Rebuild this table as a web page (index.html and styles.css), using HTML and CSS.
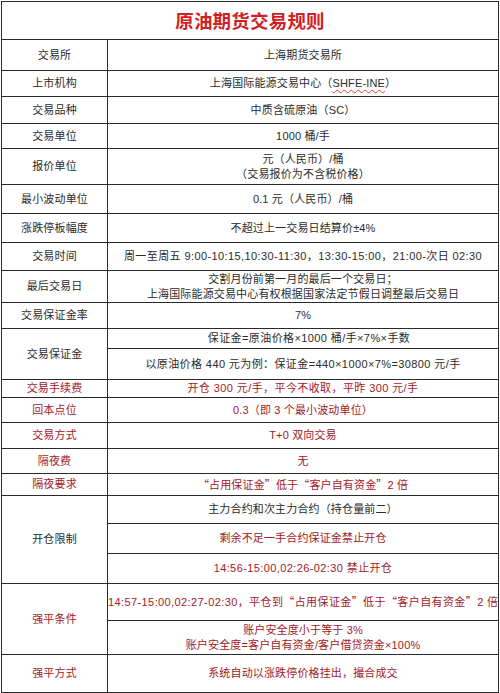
FILE: index.html
```html
<!DOCTYPE html>
<html lang="zh-CN">
<head>
<meta charset="utf-8">
<title>原油期货交易规则</title>
<link rel="stylesheet" href="styles.css">
</head>
<body>
<table class="rules">
  <colgroup><col class="c-label"><col class="c-value"></colgroup>
  <tr class="h38"><td colspan="2" class="title">原油期货交易规则</td></tr>
  <tr class="h31"><td>交易所</td><td>上海期货交易所</td></tr>
  <tr class="h26"><td>上市机构</td><td>上海国际能源交易中心（<span class="spell">SHFE-INE</span>）</td></tr>
  <tr class="h27"><td>交易品种</td><td>中质含硫原油（SC）</td></tr>
  <tr class="h25"><td>交易单位</td><td>1000 桶/手</td></tr>
  <tr class="h36"><td>报价单位</td><td>元（人民币）/桶<br>（交易报价为不含税价格）</td></tr>
  <tr class="h29"><td>最小波动单位</td><td>0.1 元（人民币）/桶</td></tr>
  <tr class="h29"><td>涨跌停板幅度</td><td>不超过上一交易日结算价±4%</td></tr>
  <tr class="h28"><td>交易时间</td><td class="latin">周一至周五 9:00-10:15,10:30-11:30，13:30-15:00，21:00-次日 02:30</td></tr>
  <tr class="h32"><td>最后交易日</td><td>交割月份前第一月的最后一个交易日；<br>上海国际能源交易中心有权根据国家法定节假日调整最后交易日</td></tr>
  <tr class="h26"><td>交易保证金率</td><td>7%</td></tr>
  <tr class="h20"><td rowspan="2">交易保证金</td><td class="shift latin">保证金=原油价格×1000 桶/手×7%×手数</td></tr>
  <tr class="h31"><td class="latin">以原油价格 440 元为例：保证金=440×1000×7%=30800 元/手</td></tr>
  <tr class="h18 red"><td>交易手续费</td><td class="latin">开仓 300 元/手，平今不收取，平昨 300 元/手</td></tr>
  <tr class="h25 red"><td>回本点位</td><td>0.3（即 3 个最小波动单位）</td></tr>
  <tr class="h26 red"><td>交易方式</td><td>T+0 双向交易</td></tr>
  <tr class="h25 red"><td>隔夜费</td><td>无</td></tr>
  <tr class="h22 red"><td>隔夜要求</td><td><span class="q">“</span>占用保证金<span class="q">”</span>低于<span class="q">“</span>客户自有资金<span class="q">”</span>2 倍</td></tr>
  <tr class="h28"><td rowspan="3">开仓限制</td><td>主力合约和次主力合约（持仓量前二）</td></tr>
  <tr class="h30"><td class="red">剩余不足一手合约保证金禁止开仓</td></tr>
  <tr class="h30"><td class="red latin">14:56-15:00,02:26-02:30 禁止开仓</td></tr>
  <tr class="h37 red"><td rowspan="2">强平条件</td><td class="latin">14:57-15:00,02:27-02:30，平仓到<span class="q">“</span>占用保证金<span class="q">”</span>低于<span class="q">“</span>客户自有资金<span class="q">”</span>2 倍</td></tr>
  <tr class="h34 red"><td>账户安全度小于等于 3%<br>账户安全度=客户自有资金/客户借贷资金×100%</td></tr>
  <tr class="h38 red"><td>强平方式</td><td>系统自动以涨跌停价格挂出，撮合成交</td></tr>
</table>
</body>
</html>
```

FILE: styles.css
```css
html, body {
  margin: 0;
  padding: 0;
  background: #fff;
}
body {
  padding: 1px 0 0 1px;
  font-family: "Liberation Sans", "Noto Sans CJK SC", sans-serif;
  font-size: 11px;
  color: #2b2b2b;
}
.rules {
  border-collapse: collapse;
  width: 497px;
  table-layout: fixed;
}
.c-label { width: 106px; }
.c-value { width: 391px; }
.rules td {
  border: 1px solid #2a2a2a;
  padding: 0;
  text-align: center;
  vertical-align: middle;
  line-height: 15px;
  white-space: nowrap;
  letter-spacing: 0.15px;
}
.rules td.latin { letter-spacing: 0.4px; }
.rules td.title {
  color: #cf1f27;
  font-family: "Noto Sans CJK SC", sans-serif;
  font-size: 18.5px;
  font-weight: 700;
  letter-spacing: 0.2px;
}
.q {
  font-family: "Noto Sans CJK SC", sans-serif;
}
.red td, td.red { color: #a3191f; }
.spell {
  text-decoration: underline wavy #e04040;
  text-decoration-thickness: 1px;
  text-underline-offset: 2px;
}
.shift { text-indent: 12px; }
.h18 { height: 18px; }
.h20 { height: 20px; }
.h22 { height: 22px; }
.h25 { height: 25px; }
.h26 { height: 26px; }
.h27 { height: 27px; }
.h28 { height: 28px; }
.h29 { height: 29px; }
.h30 { height: 30px; }
.h31 { height: 31px; }
.h32 { height: 32px; }
.h34 { height: 34px; }
.h36 { height: 36px; }
.h37 { height: 37px; }
.h38 { height: 38px; }
```
